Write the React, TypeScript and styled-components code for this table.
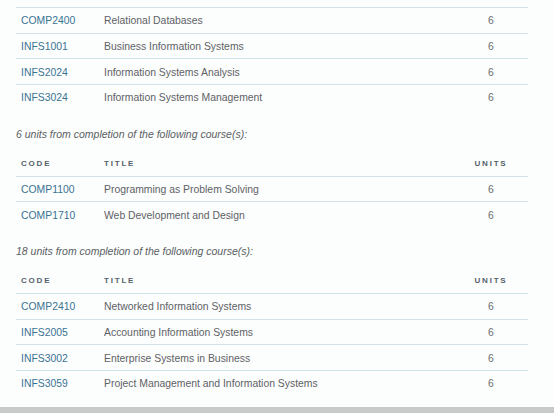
import React from "react";
import styled, { createGlobalStyle } from "styled-components";

const Global = createGlobalStyle`
  html, body {
    margin: 0;
    padding: 0;
    background: #fcfdfd;
    overflow: hidden;
  }
  body {
    font-family: "Liberation Sans", Arial, sans-serif;
  }
`;

const Page = styled.div`
  width: 554px;
  height: 413px;
  display: flex;
  flex-direction: column;
  background: #fcfdfd;
`;

const Content = styled.main`
  flex: 1;
  padding: 7px 26px 0 16px;
  display: flex;
  flex-direction: column;
`;

const Caption = styled.p`
  margin: 14px 0 6px;
  font-style: italic;
  font-size: 10.5px;
  line-height: 20px;
  color: #5a5f63;
`;

const Table = styled.div`
  display: flex;
  flex-direction: column;
  width: 512px;
`;

const Row = styled.div<{ $header?: boolean }>`
  display: grid;
  grid-template-columns: 83px 1fr 74px;
  align-items: center;
  height: ${(p) => (p.$header ? "26px" : "25.67px")};
  box-sizing: border-box;
  border-top: ${(p) => (p.$header ? "none" : "1px solid #d3e3eb")};
`;

const HeadCell = styled.div<{ $center?: boolean }>`
  padding-left: ${(p) => (p.$center ? "0" : "5px")};
  text-align: ${(p) => (p.$center ? "center" : "left")};
  font-size: 8px;
  font-weight: bold;
  letter-spacing: 1.8px;
  color: #53616a;
  padding-top: 1px;
`;

const Code = styled.a`
  padding-left: 5px;
  font-size: 10.4px;
  color: #3a7392;
  text-decoration: none;
  padding-top: 1px;
`;

const Title = styled.div`
  padding-left: 5px;
  font-size: 10.4px;
  color: #5e6265;
  padding-top: 1px;
`;

const Units = styled.div`
  text-align: center;
  font-size: 10.4px;
  color: #6a6d70;
  padding-top: 1px;
`;

const Footer = styled.div`
  height: 6px;
  background: #c8c9c9;
`;

type Course = { code: string; title: string; units: number };

const top: Course[] = [
  { code: "COMP2400", title: "Relational Databases", units: 6 },
  { code: "INFS1001", title: "Business Information Systems", units: 6 },
  { code: "INFS2024", title: "Information Systems Analysis", units: 6 },
  { code: "INFS3024", title: "Information Systems Management", units: 6 },
];

const six: Course[] = [
  { code: "COMP1100", title: "Programming as Problem Solving", units: 6 },
  { code: "COMP1710", title: "Web Development and Design", units: 6 },
];

const eighteen: Course[] = [
  { code: "COMP2410", title: "Networked Information Systems", units: 6 },
  { code: "INFS2005", title: "Accounting Information Systems", units: 6 },
  { code: "INFS3002", title: "Enterprise Systems in Business", units: 6 },
  { code: "INFS3059", title: "Project Management and Information Systems", units: 6 },
];

const CourseTable: React.FC<{ courses: Course[]; header?: boolean }> = ({ courses, header }) => (
  <Table>
    {header && (
      <Row $header>
        <HeadCell>CODE</HeadCell>
        <HeadCell>TITLE</HeadCell>
        <HeadCell $center>UNITS</HeadCell>
      </Row>
    )}
    {courses.map((c) => (
      <Row key={c.code}>
        <Code href="#">{c.code}</Code>
        <Title>{c.title}</Title>
        <Units>{c.units}</Units>
      </Row>
    ))}
  </Table>
);

export default function App() {
  return (
    <Page>
      <Global />
      <Content>
        <CourseTable courses={top} />
        <Caption>6 units from completion of the following course(s):</Caption>
        <CourseTable courses={six} header />
        <Caption>18 units from completion of the following course(s):</Caption>
        <CourseTable courses={eighteen} header />
      </Content>
      <Footer />
    </Page>
  );
}
